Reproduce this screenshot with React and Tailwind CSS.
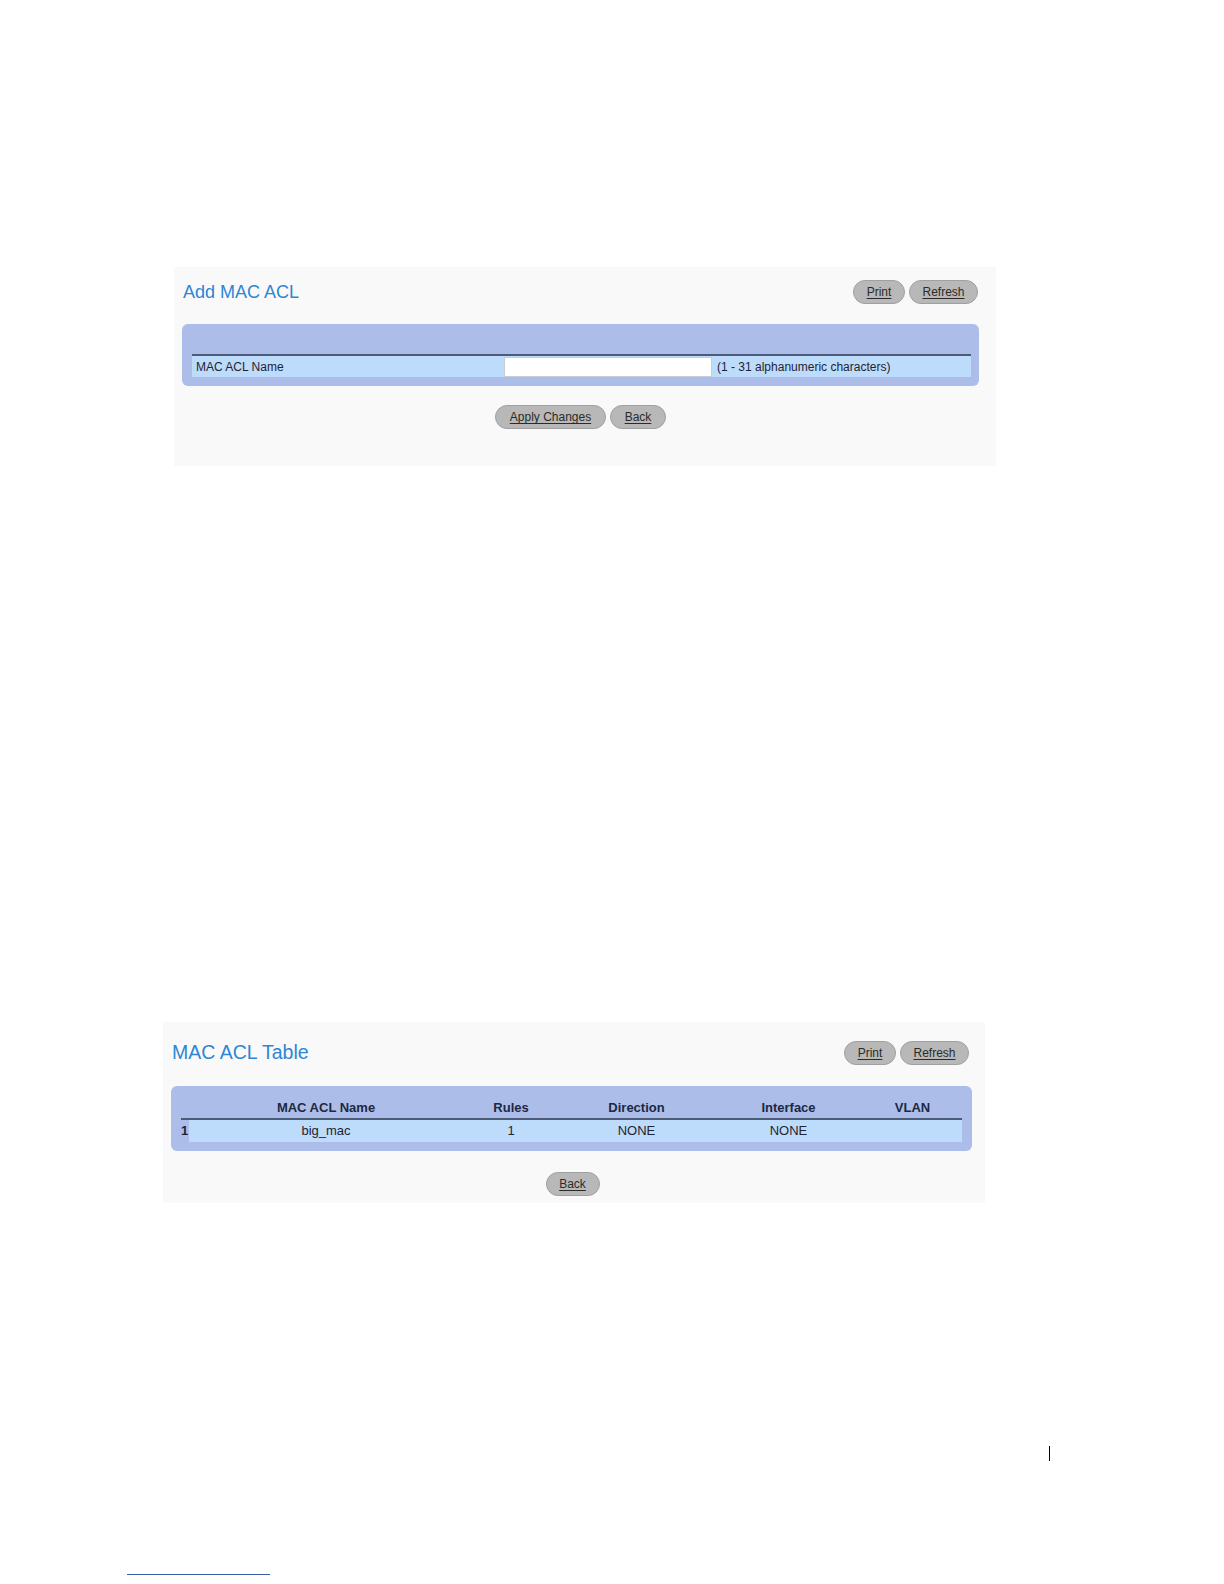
const font = { fontFamily: '"Liberation Sans", Arial, sans-serif' };

function PillButton({ children, className = "" }) {
  return (
    <button
      className={`h-[24px] rounded-full border border-[#a0a0a0] bg-[#b8b8b8] text-[12px] leading-none text-[#2b2b2b] underline underline-offset-2 ${className}`}
    >
      {children}
    </button>
  );
}

function TitleRow({ title, size, mr }) {
  return (
    <div className="flex items-center justify-between">
      <h2 className={`ml-[1px] leading-none text-[#2e86d4] ${size}`}>{title}</h2>
      <div className={`flex gap-[4px] ${mr}`}>
        <PillButton className="w-[52px]">Print</PillButton>
        <PillButton className="w-[69px]">Refresh</PillButton>
      </div>
    </div>
  );
}

function AddMacAcl() {
  return (
    <div className="ml-[174px] w-[822px] bg-[#f9f9f9] pl-[8px] pr-[17px] pt-[13px] pb-[37px]">
      <TitleRow title="Add MAC ACL" size="text-[18px]" mr="mr-[1px]" />

      <div className="mt-[20px] rounded-[6px] bg-[#adbde9] pl-[10px] pr-[8px] pt-[30px] pb-[9px]">
        <div className="h-[2px] bg-[#4c5b78]" />
        <div className="flex h-[21px] items-center bg-[#bddbfa] text-[12px] text-[#1f2433]">
          <div className="w-[312px] pl-[4px]">MAC ACL Name</div>
          <input
            className="h-[20px] w-[208px] border border-[#c8ccd4] bg-white"
            readOnly
          />
          <div className="pl-[5px]">(1 - 31 alphanumeric characters)</div>
        </div>
      </div>

      <div className="mt-[19px] flex justify-center gap-[4px]">
        <PillButton className="w-[111px]">Apply Changes</PillButton>
        <PillButton className="w-[56px]">Back</PillButton>
      </div>
    </div>
  );
}

const cols = "grid grid-cols-[8px_274px_96px_155px_149px_99px]";
const cell = "flex h-full items-center justify-center bg-[#bddbfa]";

function MacAclTable() {
  return (
    <div className="ml-[163px] w-[822px] bg-[#f9f9f9] pl-[8px] pr-[13px] pt-[19px] pb-[7px]">
      <TitleRow title="MAC ACL Table" size="text-[19.5px]" mr="mr-[3px]" />

      <div className="mt-[21px] rounded-[6px] bg-[#adbde9] pl-[10px] pr-[10px] pt-[11px] pb-[9px]">
        <div className={`${cols} h-[21px] items-center text-[13px] font-bold text-[#1c2844]`}>
          <div />
          <div className="text-center">MAC ACL Name</div>
          <div className="text-center">Rules</div>
          <div className="text-center">Direction</div>
          <div className="text-center">Interface</div>
          <div className="text-center">VLAN</div>
        </div>
        <div className="h-[2px] bg-[#4c5b78]" />
        <div className={`${cols} h-[22px] items-center text-[13px] text-[#1f2433]`}>
          <div className="font-bold">1</div>
          <div className={cell}>big_mac</div>
          <div className={cell}>1</div>
          <div className={cell}>NONE</div>
          <div className={cell}>NONE</div>
          <div className="h-full bg-[#bddbfa]" />
        </div>
      </div>

      <div className="mt-[21px] flex justify-center pl-[2px]">
        <PillButton className="w-[54px]">Back</PillButton>
      </div>
    </div>
  );
}

export default function App() {
  return (
    <div className="h-[1584px] w-[1224px] bg-white" style={font}>
      <div className="pt-[267px]">
        <AddMacAcl />
      </div>
      <div className="pt-[556px]">
        <MacAclTable />
      </div>
      <div className="ml-[1049px] mt-[243px] h-[15px] w-[1px] bg-black" />
      <div className="ml-[127px] mt-[113px] h-[1px] w-[143px] bg-[#3b5bb5]" />
    </div>
  );
}
